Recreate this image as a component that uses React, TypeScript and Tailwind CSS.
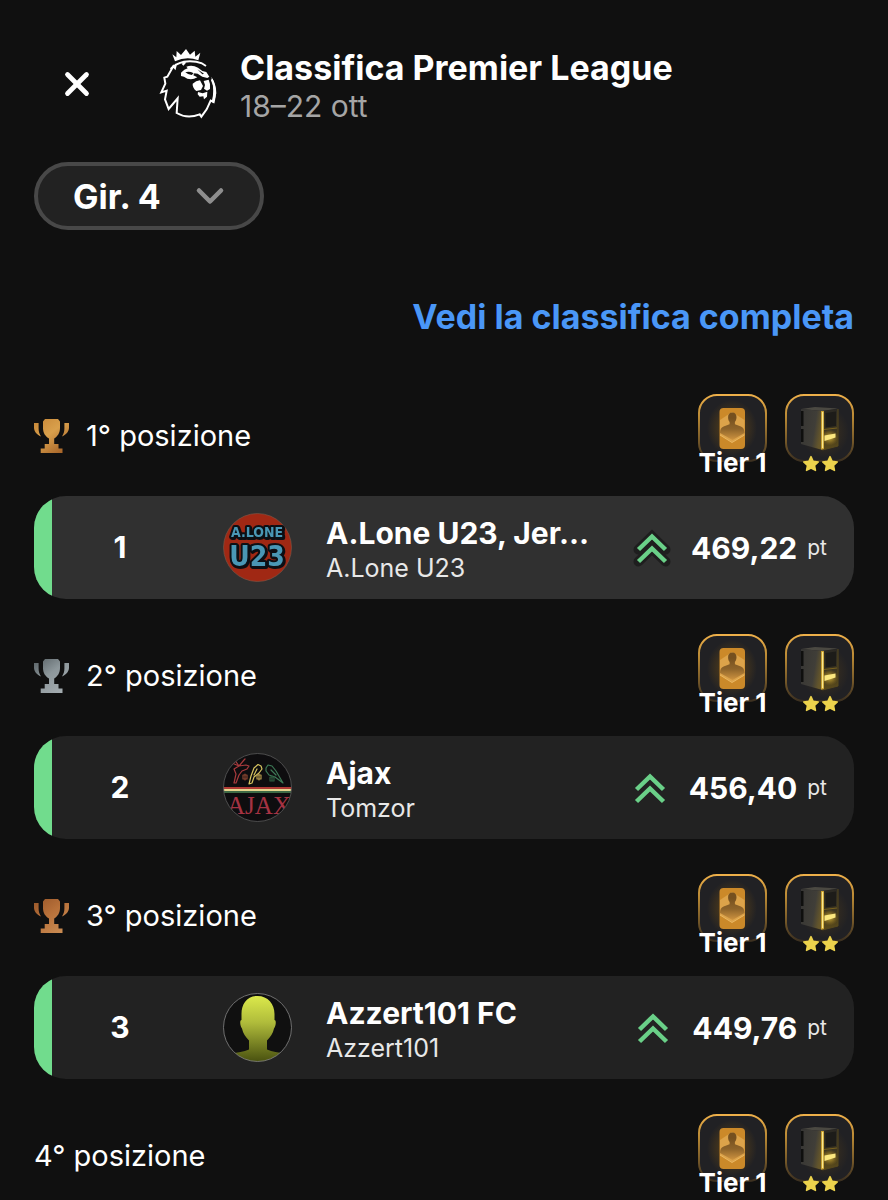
import { useId } from 'react';
import { X, ChevronDown } from 'lucide-react';

type Trophy = 'gold' | 'silver' | 'bronze';

interface Entry {
  rank: number;
  name: string;
  manager: string;
  score: string;
  own?: boolean;
  trophy: Trophy;
}

const entries: Entry[] = [
  { rank: 1, name: 'A.Lone U23, Jer…', manager: 'A.Lone U23', score: '469,22', own: true, trophy: 'gold' },
  { rank: 2, name: 'Ajax', manager: 'Tomzor', score: '456,40', trophy: 'silver' },
  { rank: 3, name: 'Azzert101 FC', manager: 'Azzert101', score: '449,76', trophy: 'bronze' },
];

const trophyColors: Record<Trophy, [string, string, string]> = {
  gold: ['#c98a3a', '#d9a04c', '#a8662a'],
  silver: ['#5f686c', '#8d979b', '#a4acb0'],
  bronze: ['#9c5a2c', '#b8713a', '#c98b52'],
};

function LeagueLogo() {
  return (
    <svg className="h-[70px] w-[68px]" viewBox="0 15 204 210" fill="#fff" aria-hidden="true">
      {/* crown */}
      <path d="M63 52L55 31l12 9 1-19 13 12L96 15l12 17 14-12 2 18 15-12-6 23q-35-14-70 3z" />
      {/* mane outline */}
      <g fill="none" stroke="#fff" strokeWidth="6" strokeLinejoin="miter">
        <path d="M60 63L40 98l-9 3 3 18-12 26 16-5-5 26 11 29 27-32-3 44q32 19 69 4l5 7 16-22 12-26 9 4q10-38-6-68" />
        <path d="M50 75q16-17 40-22 30-4 54 5M66 60l-3 12-5-6M94 54l-8 9M142 57l14 9" />
      </g>
      <path d="M172 98q15 24 15 50l-8 30-6-5q10-34-1-75z" />
      {/* brow and eyes */}
      <path d="M81 86q10-11 20-13l-4-5q18-6 35 3l13 10 12 3 9 14-6 4-15-4-14-9-10-1-3 6 12 6q-22 12-40-2l-9-2z" />
      <path d="M94 85q12-4 25 3l-6 5q-12-1-19-8zM130 76l20 13-5 2z" fill="#101010" />
      {/* muzzle */}
      <path d="M116 119q10-9 22-10l9 17-6 12-14 3q-12-10-11-22zM149 111l15-4q6 12 4 28l-9 5-9-6 3-11z" />
      <path d="M132 144l14 4 14-5-1 15-9 8-2-9-11 1-6-7z" />
    </svg>
  );
}

function TrophyIcon({ kind }: { kind: Trophy }) {
  const id = useId();
  const [from, mid, to] = trophyColors[kind];
  return (
    <svg className="w-9 h-9 shrink-0" viewBox="0 0 36 36" aria-hidden="true">
      <defs>
        <linearGradient id={id} gradientUnits="userSpaceOnUse" x1="4" y1="2" x2="28" y2="34">
          <stop offset="0" stopColor={from} />
          <stop offset="0.45" stopColor={mid} />
          <stop offset="1" stopColor={to} />
        </linearGradient>
      </defs>
      <path
        fill={`url(#${id})`}
        d="M11 1h13l2 2.500v6.500c0 5-2.500 8.500-5.800 10.500v5.500h4.300v4.500h4V35H6.700v-4.500h4V26H15v-5.500C11.500 18.500 9 15 9 10V3.500zM0 5h4.600v5.500c0 3 .8 5.500 2.400 8C2.500 16.500 0 13.500 0 9.500zM35 5h-4.600v5.500c0 3-.8 5.500-2.400 8 4.500-2 7-5 7-9z"
      />
    </svg>
  );
}

function BadgeFrame({ id }: { id: string }) {
  return (
    <>
      <defs>
        <linearGradient id={`${id}-edge`} x1="0" y1="0" x2="0" y2="1">
          <stop offset="0" stopColor="#eeb04a" />
          <stop offset="0.35" stopColor="#b58633" />
          <stop offset="0.75" stopColor="#6b5127" />
          <stop offset="1" stopColor="#3c3020" />
        </linearGradient>
        <radialGradient id={`${id}-glow`} cx="0.5" cy="0.5" r="0.5">
          <stop offset="0.2" stopColor="#7a5412" stopOpacity="0.6" />
          <stop offset="1" stopColor="#7a5412" stopOpacity="0" />
        </radialGradient>
      </defs>
      <rect x="1" y="1" width="67" height="66" rx="18" fill="#212124" stroke={`url(#${id}-edge)`} strokeWidth="2" />
    </>
  );
}

function CardBadge() {
  const id = useId();
  return (
    <div className="flex w-[69px] flex-col items-center">
      <svg className="block h-[68px] w-[69px]" viewBox="0 0 69 68" aria-hidden="true">
        <BadgeFrame id={id} />
        <ellipse cx="34" cy="34" rx="25" ry="28" fill={`url(#${id}-glow)`} />
        <linearGradient id={`${id}-man`} x1="0" y1="0" x2="0" y2="1">
          <stop offset="0.2" stopColor="#75501f" />
          <stop offset="0.6" stopColor="#8e642a" />
          <stop offset="1" stopColor="#cf9440" />
        </linearGradient>
        <rect x="21.500" y="14" width="25.500" height="41" rx="4" fill="#cb8929" />
        <path d="M22 26l12-8 12.500 8v15L34 48.500 22 41z" fill="#dca34a" />
        <path d="M22 41l12 7.500L46.500 41" fill="none" stroke="#eab862" strokeWidth="1" />
        <path
          d="M34.300 18.500c2.900 0 4.400 2 4.200 5.200-.2 2.300-1 3.500-1.600 4.300v2.200l6 2.300c2.500.9 3.500 3 3.600 6.500L34.500 46 22 39c.1-3.500 1-5.600 3.600-6.500l6-2.300V28c-.7-.8-1.400-2-1.500-4.300-.2-3.200 1.300-5.200 4.200-5.200z"
          fill={`url(#${id}-man)`}
        />
      </svg>
      <span className="relative -mt-[14px] text-[26px] leading-[30px] font-bold whitespace-nowrap">Tier 1</span>
    </div>
  );
}

function Star() {
  return (
    <svg className="h-[18px] w-[18px]" viewBox="0 0 24 24" aria-hidden="true">
      <path
        d="M12 2.200l2.900 6.200 6.800.8-5 4.700 1.300 6.700-6-3.300-6 3.300 1.300-6.700-5-4.700 6.800-.8z"
        fill="#ecd24c"
        stroke="#ecd24c"
        strokeWidth="2"
        strokeLinejoin="round"
      />
    </svg>
  );
}

function BoxBadge() {
  const id = useId();
  return (
    <div className="flex w-[69px] flex-col items-center">
      <svg className="block h-[68px] w-[69px]" viewBox="0 0 69 68" aria-hidden="true">
        <BadgeFrame id={id} />
        <defs>
          <linearGradient id={`${id}-side`} x1="0" y1="0" x2="1" y2="0.3">
            <stop offset="0" stopColor="#363533" />
            <stop offset="0.7" stopColor="#403e38" />
            <stop offset="1" stopColor="#65562a" />
          </linearGradient>
          <linearGradient id={`${id}-front`} x1="0" y1="0" x2="0" y2="1">
            <stop offset="0" stopColor="#2b2924" />
            <stop offset="0.5" stopColor="#3b3420" />
            <stop offset="1" stopColor="#5d4c1a" />
          </linearGradient>
          <radialGradient id={`${id}-light`}>
            <stop offset="0" stopColor="#f7d64a" stopOpacity="0.8" />
            <stop offset="1" stopColor="#b98b1c" stopOpacity="0" />
          </radialGradient>
        </defs>
        <ellipse cx="40" cy="38" rx="24" ry="26" fill={`url(#${id}-glow)`} opacity="0.5" />
        <path d="M16 15l14-2 23 1.500L37.500 17z" fill="#4b4942" />
        <path d="M16 15l21.500 2v39L16 50z" fill={`url(#${id}-side)`} />
        <path d="M16 17h2.500v15H16zM16 35h2.500v13H16z" fill="#0f0f0e" />
        <path d="M37.500 17L53 15v37l-15.500 4z" fill={`url(#${id}-front)`} />
        <path d="M40.500 19l10.500-1.500V32l-10.500 1.500z" fill="#1d1c19" />
        <path d="M39 35.500l13-1.500" stroke="#77611f" strokeWidth="1.200" />
        <ellipse cx="44.500" cy="43.500" rx="9" ry="8" fill={`url(#${id}-light)`} />
        <path d="M37.500 17v38.500" stroke="#d3a832" strokeWidth="2.800" />
        <path d="M37.600 18v36" stroke="#fae88f" strokeWidth="1.200" />
        <path d="M39.500 41.500l11-2v4l-11 3.500z" fill="#fbe77f" />
        <path d="M53 15v37l-15.500 4" fill="none" stroke="#57481d" strokeWidth="1" />
      </svg>
      <div className="relative -mt-[7px] flex gap-px pl-0.5">
        <Star />
        <Star />
      </div>
    </div>
  );
}

function LoneAvatar() {
  return (
    <svg className="h-[69px] w-[69px]" viewBox="0 0 69 69" aria-hidden="true">
      <circle cx="34.500" cy="34.500" r="34" fill="#a02814" stroke="#7c5a4c" strokeWidth="0.600" />
      <g
        className="font-['DejaVu_Sans_Condensed','DejaVu_Sans',sans-serif] font-bold drop-shadow-[1px_1px_0_#0d0f14]"
        fill="#4a97b5"
        stroke="#0d0f14"
        strokeWidth="4"
        strokeLinejoin="round"
        textAnchor="middle"
        paintOrder="stroke"
      >
        <text x="34" y="24" fontSize="14">A.LONE</text>
        <text x="34" y="53" fontSize="28">U23</text>
      </g>
    </svg>
  );
}

function AjaxAvatar() {
  const id = useId();
  return (
    <svg className="h-[69px] w-[69px]" viewBox="0 0 69 69" aria-hidden="true">
      <clipPath id={id}>
        <circle cx="34.500" cy="34.500" r="34" />
      </clipPath>
      <g clipPath={`url(#${id})`}>
        <rect width="69" height="69" fill="#0e0d0f" />
        <g fill="none" strokeWidth="1.200" strokeLinejoin="round" strokeLinecap="round">
          {/* three birds on their perches */}
          <path d="M9 10l7 3 5-6 1-1M16 13l7-1 3 1-2 3-5 2-3 4-3 8h-2l2-9-2-5zM11 6l5 7" stroke="#a83a3d" />
          <path d="M38 13l-3-1.500-4 3.500-3 8-2 8 3-1 2-6 5-4 3-4zM34 16l-3 6" stroke="#d6c460" />
          <path d="M43 15l2-3 4 1 4 5 7 12-8-6-6-2-3-4zM48 17l5 5" stroke="#3d7a56" />
          <path d="M20 22h4v4h-4zM22 21v6" stroke="#8a4530" />
          <path d="M34 22h4v4h-4zM36 21v6" stroke="#b59a4c" />
          <path d="M47 24h4v4h-4zM49 23v5" stroke="#2f5c40" />
        </g>
        <path d="M0 35h69" stroke="#b03a35" strokeWidth="2" />
        <path d="M0 37h69" stroke="#e6d68e" strokeWidth="2" />
        <path d="M0 39h69" stroke="#4f8a58" strokeWidth="1.500" />
        <text x="36" y="61" textAnchor="middle" fontSize="25" className="font-['Liberation_Serif',serif]" fill="#a53343">
          AJAX
        </text>
      </g>
      <circle cx="34.500" cy="34.500" r="34" fill="none" stroke="#5a5a5a" strokeWidth="0.800" />
    </svg>
  );
}

function DefaultAvatar() {
  const id = useId();
  return (
    <svg className="h-[69px] w-[69px]" viewBox="0 0 69 69" aria-hidden="true">
      <defs>
        <linearGradient id={`${id}-fill`} x1="0" y1="0" x2="0" y2="1">
          <stop offset="0" stopColor="#dbe94b" />
          <stop offset="0.4" stopColor="#b0bc3b" />
          <stop offset="1" stopColor="#48500f" />
        </linearGradient>
        <clipPath id={id}>
          <circle cx="34.500" cy="34.500" r="34" />
        </clipPath>
      </defs>
      <g clipPath={`url(#${id})`}>
        <rect width="69" height="69" fill="#101010" />
        <path
          fill={`url(#${id}-fill)`}
          d="M34.500 3C45 3 51.500 11 51.500 21v6c2 0 1.500 6-.5 8.500-1 5-3.500 8.500-7 12v9c5 2.500 12 2.500 17 4.500V69H9v-8c5-2 12-2 17-4.500v-9c-3.500-3.500-6-7-7-12-2-2.500-2.500-8.500-.5-8.500v-6C18.500 11 24 3 34.500 3z"
        />
      </g>
      <circle cx="34.500" cy="34.500" r="34" fill="none" stroke="#858585" strokeWidth="0.800" />
    </svg>
  );
}

function TrendUp({ outlined }: { outlined?: boolean }) {
  const d = 'M6.500 21.500L20 8.500l13.500 13M6.500 33.500L20 20.500l13.500 13';
  return (
    <svg className="h-10 w-10 shrink-0" viewBox="0 0 40 40" fill="none" overflow="visible" aria-hidden="true">
      {outlined && <path d={d} stroke="#1e1e1e" strokeWidth="10" strokeLinecap="round" />}
      <path d={d} stroke="#6ad088" strokeWidth="4.500" />
    </svg>
  );
}

function PositionHeader({ rank, trophy }: { rank: number; trophy?: Trophy }) {
  return (
    <div className="flex h-[84px] items-center justify-between">
      <h2 className="flex items-center gap-4 text-[29px] leading-9 font-normal">
        {trophy && <TrophyIcon kind={trophy} />}
        {rank}° posizione
      </h2>
      <div className="flex items-start gap-[18px]">
        <CardBadge />
        <BoxBadge />
      </div>
    </div>
  );
}

const avatars = [LoneAvatar, AjaxAvatar, DefaultAvatar];

function RankingRow({ entry }: { entry: Entry }) {
  const Avatar = avatars[entry.rank - 1];
  return (
    <div
      className={`mt-[18px] flex h-[103px] items-center overflow-hidden rounded-[32px] ${
        entry.own ? 'bg-[#303030]' : 'bg-[#222222]'
      }`}
    >
      <div className="w-[18px] shrink-0 self-stretch bg-[#71dc8d]" />
      <div className="w-[136px] shrink-0 text-center text-[30px] font-bold">{entry.rank}</div>
      <div className="ml-[35px] shrink-0">
        <Avatar />
      </div>
      <div className="ml-[34px] min-w-0 flex-1 pt-1">
        <div className="truncate text-[30px] leading-9 font-bold">{entry.name}</div>
        <div className="truncate text-[25px] leading-[34px] text-[#e8e8e8]">{entry.manager}</div>
      </div>
      <TrendUp outlined={entry.own} />
      <div className="ml-[19px] text-[30px] leading-9 font-bold">{entry.score}</div>
      <div className="mr-[27px] ml-2.5 text-[21px] text-[#e8e8e8]">pt</div>
    </div>
  );
}

export default function App() {
  return (
    <main className="min-h-screen bg-[#101010] px-[34px] pt-[49px] font-['Inter',sans-serif] text-white">
      <header className="flex items-start">
        <button type="button" aria-label="Chiudi" className="ml-6 flex h-[70px] w-[38px] items-center justify-center">
          <X className="h-[38px] w-[38px]" strokeWidth={3} />
        </button>
        <div className="ml-[58px]">
          <LeagueLogo />
        </div>
        <div className="ml-[18px]">
          <h1 className="text-[34px] leading-[38px] font-bold">Classifica Premier League</h1>
          <p className="text-[30px] leading-[38px] text-[#a5a5a5]">18–22 ott</p>
        </div>
      </header>

      <div className="mt-[37px] grid h-[68px] w-[230px] items-center">
        <select
          aria-label="Girone"
          defaultValue="4"
          className="col-start-1 row-start-1 h-full w-full appearance-none rounded-full border-4 border-[#484848] bg-[#222222] pl-[35px] text-[34px] font-bold text-white"
        >
          <option value="4">Gir. 4</option>
          <option value="3">Gir. 3</option>
          <option value="2">Gir. 2</option>
          <option value="1">Gir. 1</option>
        </select>
        <ChevronDown
          className="pointer-events-none col-start-1 row-start-1 mr-8 h-11 w-11 justify-self-end text-[#8e8e8e]"
          strokeWidth={2.5}
        />
      </div>

      <div className="mt-[67px] flex justify-end">
        <a href="#classifica" className="text-[34px] leading-10 font-bold text-[#4a97f7]">
          Vedi la classifica completa
        </a>
      </div>

      <div className="mt-[57px] flex flex-col gap-[35px]">
        {entries.map((entry) => (
          <section key={entry.rank}>
            <PositionHeader rank={entry.rank} trophy={entry.trophy} />
            <RankingRow entry={entry} />
          </section>
        ))}
        <section>
          <PositionHeader rank={4} />
        </section>
      </div>
    </main>
  );
}
